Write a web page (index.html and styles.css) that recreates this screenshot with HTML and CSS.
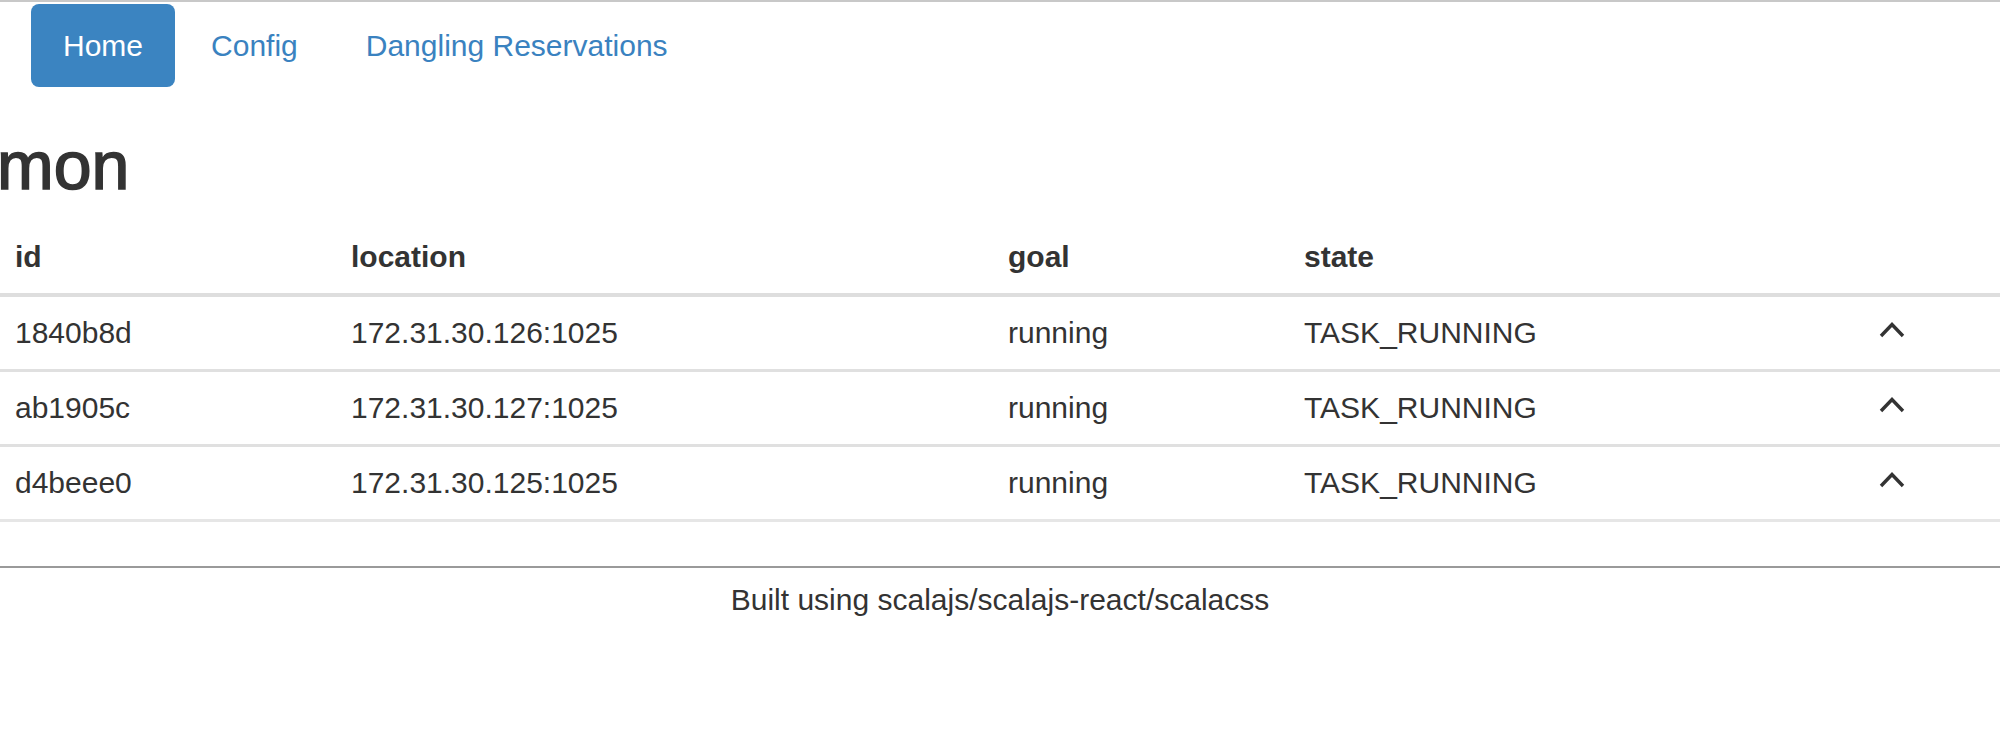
FILE: index.html
```html
<!DOCTYPE html>
<html lang="en">
<head>
<meta charset="utf-8">
<title>Tasks</title>
<link rel="stylesheet" href="styles.css">
</head>
<body>
<div class="page">
  <ul class="nav">
    <li class="nav-item active"><a href="#">Home</a></li>
    <li class="nav-item"><a href="#">Config</a></li>
    <li class="nav-item"><a href="#">Dangling Reservations</a></li>
  </ul>
  <h1 class="title">mon</h1>
  <table class="tasks">
    <colgroup>
      <col class="c-id"><col class="c-loc"><col class="c-goal"><col class="c-state"><col class="c-act">
    </colgroup>
    <thead>
      <tr><th>id</th><th>location</th><th>goal</th><th>state</th><th></th></tr>
    </thead>
    <tbody>
      <tr><td>1840b8d</td><td>172.31.30.126:1025</td><td>running</td><td>TASK_RUNNING</td><td><svg class="caret" width="26" height="17" viewBox="0 0 26 17"><polyline points="2,15 13,3.5 24,15" fill="none" stroke="#333" stroke-width="3.4"/></svg></td></tr>
      <tr><td>ab1905c</td><td>172.31.30.127:1025</td><td>running</td><td>TASK_RUNNING</td><td><svg class="caret" width="26" height="17" viewBox="0 0 26 17"><polyline points="2,15 13,3.5 24,15" fill="none" stroke="#333" stroke-width="3.4"/></svg></td></tr>
      <tr><td>d4beee0</td><td>172.31.30.125:1025</td><td>running</td><td>TASK_RUNNING</td><td><svg class="caret" width="26" height="17" viewBox="0 0 26 17"><polyline points="2,15 13,3.5 24,15" fill="none" stroke="#333" stroke-width="3.4"/></svg></td></tr>
    </tbody>
  </table>
  <footer class="footer">Built using scalajs/scalajs-react/scalacss</footer>
</div>
</body>
</html>
```

FILE: styles.css
```css
html, body {
  margin: 0;
  padding: 0;
  background: #fff;
}
body {
  font-family: "Liberation Sans", Arial, Helvetica, sans-serif;
  font-size: 30px;
  color: #333;
  overflow: hidden;
}
.page {
  border-top: 2px solid #c8c8c8;
  width: 2000px;
}
.nav {
  list-style: none;
  margin: 2px 0 0 0;
  padding: 0 0 0 31px;
  display: flex;
  gap: 4px;
}
.nav-item a {
  display: block;
  padding: 21px 32px;
  line-height: 41px;
  color: #3a82c0;
  text-decoration: none;
  border-radius: 8px;
}
.nav-item.active a {
  background: #3b84c1;
  color: #fff;
}
.title {
  font-size: 68px;
  font-weight: normal;
  -webkit-text-stroke: 1.6px #333;
  line-height: 80px;
  margin: 38px 0 16px -3px;
  color: #333;
}
.tasks {
  width: 2000px;
  table-layout: fixed;
  border-collapse: collapse;
  margin: 0 0 44px 0;
}
.c-id { width: 335px; }
.c-loc { width: 657px; }
.c-goal { width: 296px; }
.c-state { width: 575px; }
.c-act { width: 137px; }
.tasks th, .tasks td {
  text-align: left;
  padding: 16px 16px 16px 16px;
  line-height: 40px;
  white-space: nowrap;
}
.tasks th:first-child, .tasks td:first-child {
  padding-left: 15px;
}
.tasks th {
  font-weight: bold;
  border-bottom: 4px solid #dedede;
}
.tasks td {
  border-top: 3px solid #e0e0e0;
}
.tasks tbody tr:first-child td {
  border-top: 0;
}
.tasks tbody tr:last-child td {
  border-bottom: 3px solid #e6e6e6;
}
.caret {
  display: inline-block;
  vertical-align: top;
  margin-top: 8px;
}
.footer {
  border-top: 2px solid #9a9a9a;
  padding-top: 12px;
  line-height: 40px;
  text-align: center;
  color: #333;
}
```
